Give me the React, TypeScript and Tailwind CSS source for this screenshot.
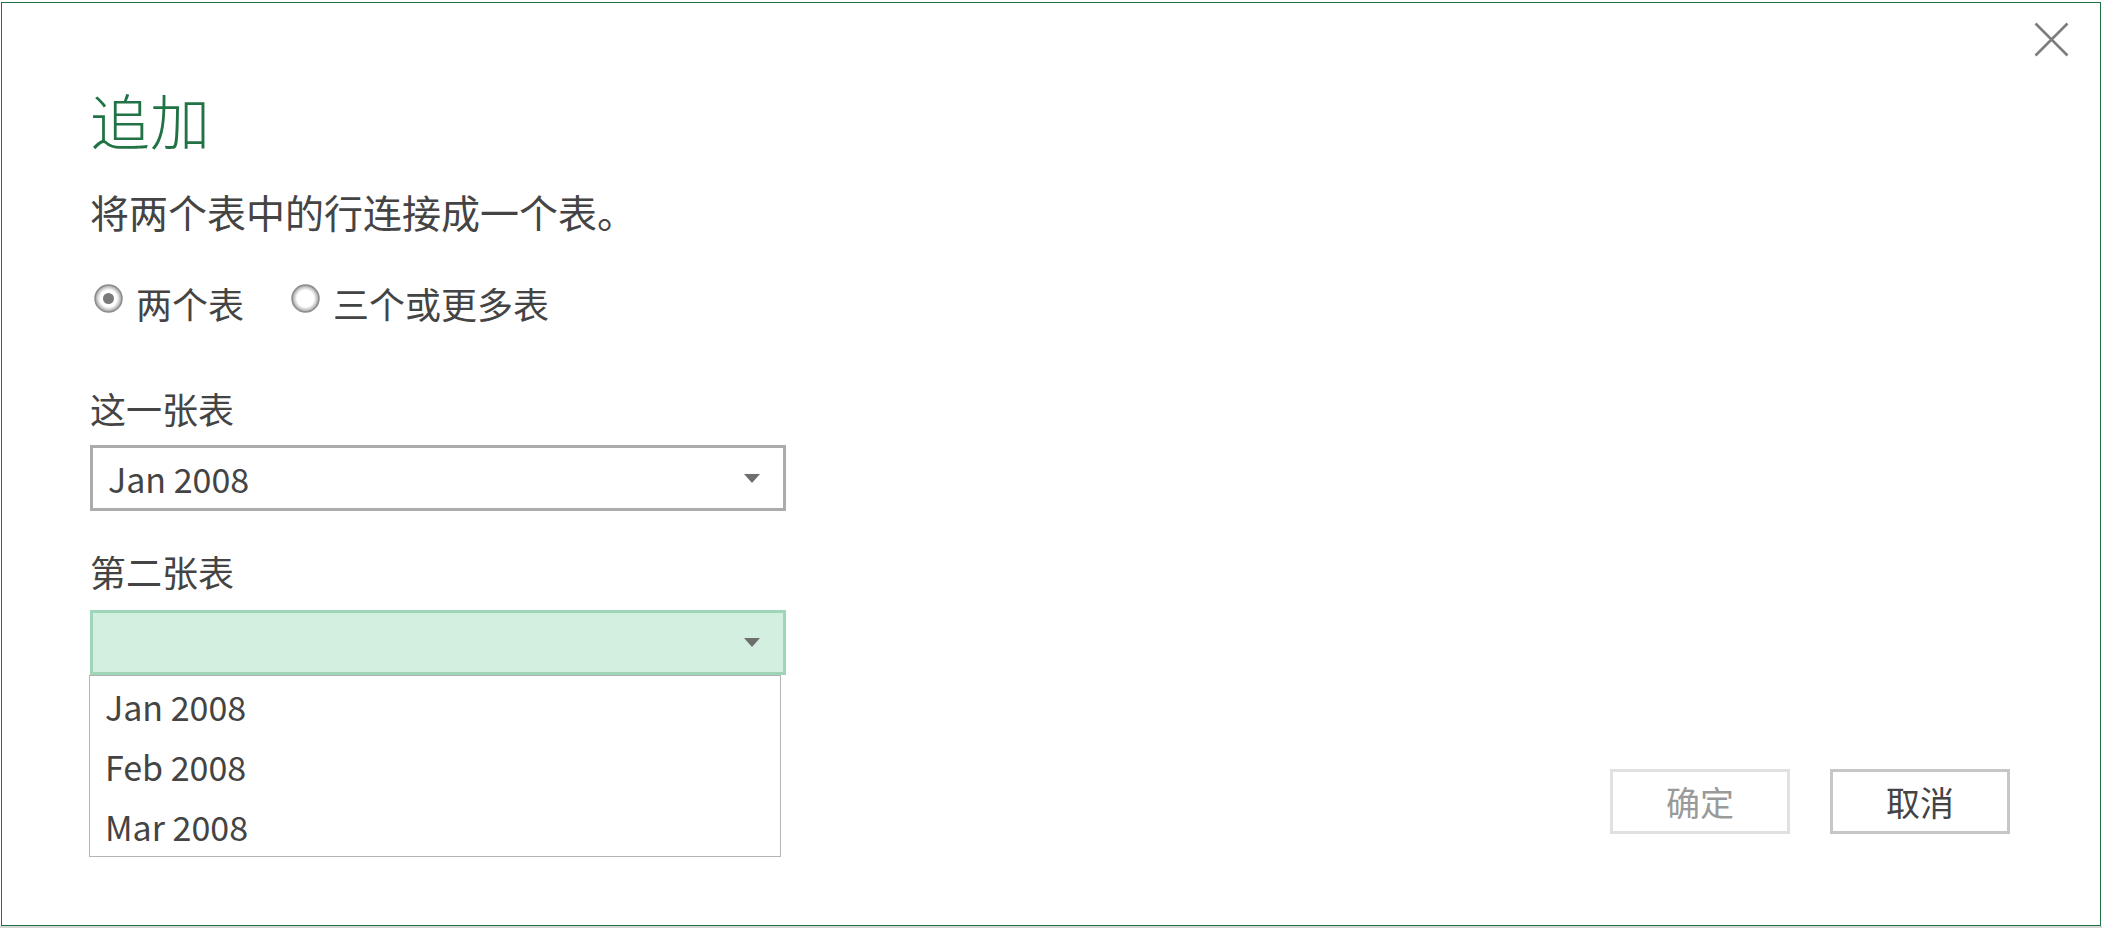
import { useState } from 'react'

const tables = ['Jan 2008', 'Feb 2008', 'Mar 2008']

function Radio({ checked }: { checked: boolean }) {
  return (
    <svg className="w-[29px] h-[29px] shrink-0 -mt-px" viewBox="0 0 29 29">
      <defs>
        <radialGradient id={checked ? 'rg1' : 'rg2'} cx="50%" cy="50%" r="50%">
          <stop offset="0%" stopColor="#ffffff" />
          <stop offset="62%" stopColor="#ffffff" />
          <stop offset="80%" stopColor="#d2d2d2" />
          <stop offset="100%" stopColor="#9a9a9a" />
        </radialGradient>
      </defs>
      <circle cx="14.5" cy="14.5" r="13.5" fill={`url(#${checked ? 'rg1' : 'rg2'})`} stroke="#8c8c8c" strokeWidth="1.5" />
      {checked && <circle cx="14.5" cy="14.5" r="5.5" fill="#7a7a7a" />}
    </svg>
  )
}

function Arrow() {
  return (
    <svg className="w-[16px] h-[9px]" viewBox="0 0 16 9">
      <polygon points="0,0 16,0 8,9" fill="#6e6e6e" />
    </svg>
  )
}

export default function App() {
  const [mode, setMode] = useState<'two' | 'many'>('two')

  return (
    <div className="relative w-[2102px] h-[928px] bg-white overflow-hidden font-['Noto_Sans_CJK_SC',sans-serif] text-[#444444]">
      <div className="pt-[2px] pl-[1px]">
        <div className="relative w-[2100px] h-[924px] border border-[#217346] pl-[88px] pr-[90px] flex flex-col">
          {/* close */}
          <button className="absolute left-[2032px] top-[19px] w-[35px] h-[35px]">
            <svg className="w-[35px] h-[35px]" viewBox="0 0 35 35">
              <path d="M1.5 1.5L33.5 33.5M33.5 1.5L1.5 33.5" stroke="#7d7d7d" strokeWidth="2.6" />
            </svg>
          </button>

          <h1 className="mt-[86px] h-[60px] text-[60px] leading-[60px] font-light text-[#217346]">追加</h1>
          <p className="mt-[43px] h-[39px] text-[39px] leading-[39px]">将两个表中的行连接成一个表。</p>

          <div className="mt-[54px] h-[36px] flex items-start text-[36px] leading-[36px]">
            <label className="flex items-start cursor-pointer ml-[4px]" onClick={() => setMode('two')}>
              <Radio checked={mode === 'two'} />
              <span className="ml-[13px]">两个表</span>
            </label>
            <label className="flex items-start cursor-pointer ml-[47px]" onClick={() => setMode('many')}>
              <Radio checked={mode === 'many'} />
              <span className="ml-[13px]">三个或更多表</span>
            </label>
          </div>

          <div className="mt-[69px] h-[36px] text-[36px] leading-[36px]">这一张表</div>
          <div className="mt-[19px] w-[696px] h-[66px] border-[3px] border-[#ababab] bg-white flex items-center justify-between pl-[15px] pr-[23px] text-[34px]">
            <span>Jan 2008</span>
            <Arrow />
          </div>

          <div className="mt-[42px] h-[36px] text-[36px] leading-[36px]">第二张表</div>
          <div className="relative mt-[21px] w-[696px] h-[65px]">
            <div className="w-full h-full border-[3px] border-[#9fd6b9] bg-[#d3efdf] flex items-center justify-end pr-[23px]">
              <Arrow />
            </div>
            <ul className="absolute left-[-1px] top-full w-[692px] border border-[#b3b3b3] bg-white z-10">
              {tables.map(t => (
                <li key={t} className="h-[60px] flex items-center pl-[15px] text-[34px]">{t}</li>
              ))}
            </ul>
          </div>

          <div className="mt-[94px] flex justify-end gap-[40px]">
            <button className="w-[180px] h-[65px] border-[3px] border-[#e1e1e1] bg-white text-[34px] text-[#9a9a9a]">确定</button>
            <button className="w-[180px] h-[65px] border-[3px] border-[#c6c6c6] bg-white text-[34px] text-[#444444]">取消</button>
          </div>
        </div>
      </div>
      <div className="h-[2px] w-full bg-[#d6d6d6]" />
    </div>
  )
}
